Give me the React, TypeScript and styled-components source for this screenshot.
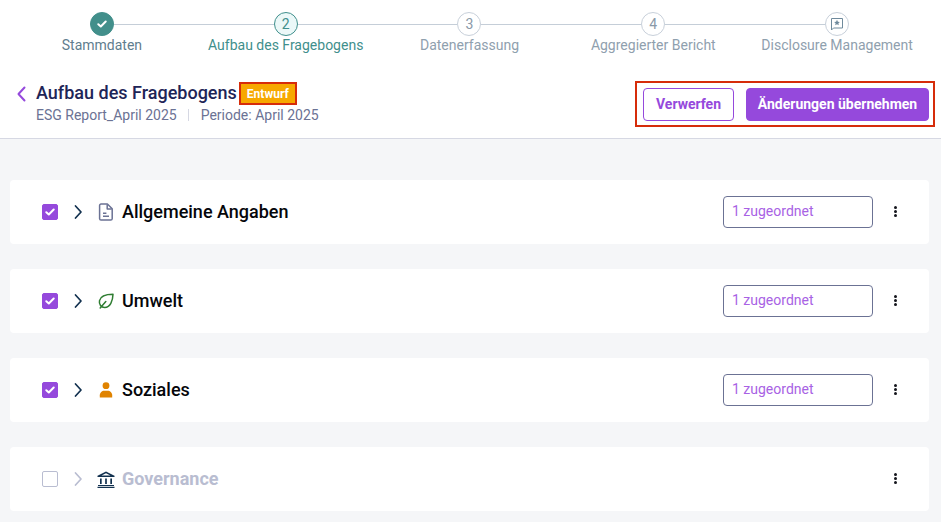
import React from "react";
import styled, { createGlobalStyle } from "styled-components";

const GlobalStyle = createGlobalStyle`
  html, body {
    margin: 0;
    padding: 0;
    background: #fff;
    font-family: Roboto, "Liberation Sans", sans-serif;
  }
`;

const Page = styled.div`
  width: 941px;
  height: 522px;
  overflow: hidden;
  display: flex;
  flex-direction: column;
  background: #f5f6f8;
`;

const Top = styled.header`
  background: #fff;
  height: 138px;
  border-bottom: 1px solid #d6d8e3;
  flex-shrink: 0;
`;

const Stepper = styled.ol`
  list-style: none;
  margin: 0;
  padding: 12px 12px 0 10px;
  display: grid;
  grid-template-columns: repeat(5, 1fr);
`;

const Step = styled.li<{ $last?: boolean }>`
  position: relative;
  display: flex;
  flex-direction: column;
  align-items: center;
  &::after {
    content: "";
    display: ${({ $last }) => ($last ? "none" : "block")};
    position: absolute;
    top: 12px;
    left: calc(50% + 12px);
    width: calc(100% - 24px);
    height: 1px;
    background: #c5ced8;
  }
`;

const StepCircle = styled.div<{ $state: "done" | "active" | "todo" }>`
  width: 24px;
  height: 24px;
  box-sizing: border-box;
  border-radius: 50%;
  display: flex;
  align-items: center;
  justify-content: center;
  font-size: 14px;
  border: 1px solid
    ${({ $state }) =>
      $state === "todo" ? "#c8d0da" : $state === "active" ? "#3f8f8c" : "#428f8b"};
  background: ${({ $state }) =>
    $state === "done" ? "#428f8b" : $state === "active" ? "#ebf8f8" : "#fff"};
  color: ${({ $state }) => ($state === "active" ? "#3f8f8c" : "#8a99a8")};
`;

const StepLabel = styled.div<{ $state: "done" | "active" | "todo" }>`
  font-size: 14px;
  line-height: 18px;
  white-space: nowrap;
  color: ${({ $state }) =>
    $state === "done" ? "#5f7d8e" : $state === "active" ? "#3f8f8c" : "#8fa0ae"};
`;

const TitleBar = styled.div`
  display: flex;
  align-items: flex-start;
  justify-content: space-between;
  padding: 27px 6px 0 16px;
`;

const TitleLeft = styled.div`
  display: flex;
  align-items: flex-start;
  gap: 9px;
`;

const BackIcon = styled.svg`
  width: 11px;
  height: 18px;
  margin-top: 4px;
  fill: none;
  stroke: #9549dc;
  stroke-width: 2;
  stroke-linecap: round;
  stroke-linejoin: round;
`;

const TitleRow = styled.div`
  display: flex;
  align-items: center;
  gap: 2px;
  height: 24px;
`;

const PageTitle = styled.h1`
  margin: 0;
  font-size: 18px;
  line-height: 24px;
  font-weight: 500;
  color: #1e2557;
`;

const Badge = styled.span`
  box-sizing: border-box;
  width: 58px;
  height: 23px;
  margin-top: 1px;
  border: 2px solid #d62c0a;
  background: #f7a800;
  color: #fff;
  font-size: 12px;
  font-weight: 700;
  display: flex;
  align-items: center;
  justify-content: center;
`;

const Meta = styled.div`
  display: flex;
  align-items: center;
  font-size: 14px;
  line-height: 18px;
  margin-top: 1px;
  color: #6b7294;
`;

const MetaDivider = styled.span`
  width: 1px;
  height: 12px;
  margin: 0 12px 0 11px;
  background: #d6d8e3;
`;

const ActionBox = styled.div`
  box-sizing: border-box;
  width: 300px;
  height: 46px;
  border: 2px solid #d62c0a;
  display: flex;
  align-items: center;
  gap: 12px;
  padding-left: 6px;
`;

const Button = styled.button<{ $primary?: boolean }>`
  box-sizing: border-box;
  height: 33px;
  padding: 0;
  width: ${({ $primary }) => ($primary ? "183px" : "91px")};
  border: 1px solid #9549dc;
  border-radius: 4px;
  background: ${({ $primary }) => ($primary ? "#9549dc" : "#fff")};
  color: ${({ $primary }) => ($primary ? "#fff" : "#9549dc")};
  font-family: inherit;
  font-size: 14px;
  font-weight: 700;
`;

const Content = styled.main`
  display: flex;
  flex-direction: column;
  gap: 25px;
  padding: 41px 12px 0 10px;
`;

const Card = styled.section`
  height: 64px;
  flex-shrink: 0;
  display: flex;
  align-items: center;
  padding: 0 32px;
  background: #fff;
  border-radius: 4px;
`;

const Check = styled.span<{ $checked: boolean }>`
  box-sizing: border-box;
  width: 16px;
  height: 16px;
  border-radius: 2px;
  display: flex;
  align-items: center;
  justify-content: center;
  background: ${({ $checked }) => ($checked ? "#9549dc" : "#fff")};
  border: 1px solid ${({ $checked }) => ($checked ? "#9549dc" : "#b9bdd1")};
`;

const Chevron = styled.svg<{ $muted: boolean }>`
  width: 10px;
  height: 16px;
  margin-left: 15px;
  fill: none;
  stroke: ${({ $muted }) => ($muted ? "#b9bdd1" : "#12314f")};
  stroke-width: 1.7;
  stroke-linecap: round;
  stroke-linejoin: round;
`;

const IconSlot = styled.span`
  width: 20px;
  height: 20px;
  margin-left: 13px;
  display: flex;
  align-items: center;
  justify-content: center;
`;

const CardTitle = styled.h2<{ $muted: boolean }>`
  margin: 0 0 2px 6px;
  flex: 1;
  font-size: 18px;
  font-weight: ${({ $muted }) => ($muted ? 700 : 500)};
  color: ${({ $muted }) => ($muted ? "#b9bdd1" : "#05060a")};
`;

const AssignedBox = styled.div`
  box-sizing: border-box;
  width: 150px;
  height: 32px;
  border: 1px solid #6b7294;
  border-radius: 4px;
  padding: 0 8px 2px;
  display: flex;
  align-items: center;
  font-size: 14px;
  color: #a862e4;
`;

const MoreButton = styled.span`
  width: 3px;
  margin: 0 0 2px 21px;
  display: flex;
  flex-direction: column;
  gap: 1px;
  i {
    display: block;
    width: 3px;
    height: 3px;
    border-radius: 50%;
    background: #14151c;
  }
`;

const CheckMark = () => (
  <svg width="10" height="8" viewBox="0 0 10 8" fill="none" stroke="#fff" strokeWidth="2" strokeLinecap="round" strokeLinejoin="round">
    <path d="M1.3 4.2 3.8 6.5 8.7 1.5" />
  </svg>
);

const DocIcon = () => (
  <svg width="16" height="18" viewBox="0 0 16 18" fill="none" stroke="#6b7294" strokeWidth="1.500" strokeLinejoin="round">
    <path d="M3 1h6.400l4.800 4.800v10a1.400 1.400 0 0 1-1.400 1.300H3a1.400 1.400 0 0 1-1.400-1.300V2.400A1.400 1.400 0 0 1 3 1Z" />
    <path d="M9.200 1.400v4.600h4.600" />
    <path d="M5 10.200h3.400M5 13.200h6" />
  </svg>
);

const LeafIcon = () => (
  <svg width="16" height="16" viewBox="0 0 16 16" fill="none" stroke="#2f7d32" strokeWidth="1.500" strokeLinecap="round" strokeLinejoin="round">
    <path d="M15 1.200C9.500 1.200 2.800 1.600 1.500 7.600c-.8 3.700 1.700 7 5.300 6.900C12.200 14.300 14.800 8 15 1.200Z" />
    <path d="M2.200 15 7.800 8.500" />
  </svg>
);

const PersonIcon = () => (
  <svg width="14" height="16" viewBox="0 0 14 16" fill="#e08300">
    <circle cx="7" cy="3.700" r="3.400" />
    <path d="M.8 15.500v-2.200C.8 10.500 3 8.700 5.200 8.700h3.600c2.200 0 4.400 1.800 4.400 4.600v2.200Z" />
  </svg>
);

const BankIcon = () => (
  <svg width="18" height="17" viewBox="0 0 18 17" fill="#12314f">
    <path d="M9 .5 17.500 4.800v1.200H.5V4.800ZM9 2.200 4.500 4.500h9Z" fillRule="evenodd" />
    <path d="M3 7.500h1.700v5.500H3ZM8.150 7.500h1.700v5.500h-1.700ZM13.300 7.500H15v5.500h-1.700ZM1 14h16v1H1ZM.5 15.800h17v1.100H.5Z" />
  </svg>
);

const DisclosureIcon = () => (
  <svg width="14" height="14" viewBox="0 0 14 14" fill="none" stroke="#6f8a9c" strokeWidth="1">
    <path d="M1.500 1.500h11v9.500H3.500L1.500 13Z" strokeLinejoin="round" />
    <path d="m7 2.800.9 1.900 2 .2-1.500 1.400.4 2L7 7.300l-1.800 1 .4-2L4.100 4.900l2-.2Z" fill="#6f8a9c" stroke="none" />
  </svg>
);

type StepState = "done" | "active" | "todo";

const steps: { label: string; state: StepState; content: React.ReactNode }[] = [
  { label: "Stammdaten", state: "done", content: <CheckMark /> },
  { label: "Aufbau des Fragebogens", state: "active", content: "2" },
  { label: "Datenerfassung", state: "todo", content: "3" },
  { label: "Aggregierter Bericht", state: "todo", content: "4" },
  { label: "Disclosure Management", state: "todo", content: <DisclosureIcon /> },
];

const sections = [
  { title: "Allgemeine Angaben", icon: <DocIcon />, checked: true },
  { title: "Umwelt", icon: <LeafIcon />, checked: true },
  { title: "Soziales", icon: <PersonIcon />, checked: true },
  { title: "Governance", icon: <BankIcon />, checked: false },
];

export default function App() {
  return (
    <Page>
      <GlobalStyle />
      <Top>
        <Stepper>
          {steps.map((step, idx) => (
            <Step key={step.label} $last={idx === steps.length - 1}>
              <StepCircle $state={step.state}>{step.content}</StepCircle>
              <StepLabel $state={step.state}>{step.label}</StepLabel>
            </Step>
          ))}
        </Stepper>
        <TitleBar>
          <TitleLeft>
            <BackIcon viewBox="0 0 11 18">
              <path d="M8.500 2.500 2.500 9l6 6.500" />
            </BackIcon>
            <div>
              <TitleRow>
                <PageTitle>Aufbau des Fragebogens</PageTitle>
                <Badge>Entwurf</Badge>
              </TitleRow>
              <Meta>
                ESG Report_April 2025
                <MetaDivider />
                Periode: April 2025
              </Meta>
            </div>
          </TitleLeft>
          <ActionBox>
            <Button>Verwerfen</Button>
            <Button $primary>Änderungen übernehmen</Button>
          </ActionBox>
        </TitleBar>
      </Top>
      <Content>
        {sections.map((section) => (
          <Card key={section.title}>
            <Check $checked={section.checked}>{section.checked && <CheckMark />}</Check>
            <Chevron $muted={!section.checked} viewBox="0 0 10 16">
              <path d="M2.500 2 8 8l-5.500 6" />
            </Chevron>
            <IconSlot>{section.icon}</IconSlot>
            <CardTitle $muted={!section.checked}>{section.title}</CardTitle>
            {section.checked && <AssignedBox>1 zugeordnet</AssignedBox>}
            <MoreButton>
              <i />
              <i />
              <i />
            </MoreButton>
          </Card>
        ))}
      </Content>
    </Page>
  );
}
